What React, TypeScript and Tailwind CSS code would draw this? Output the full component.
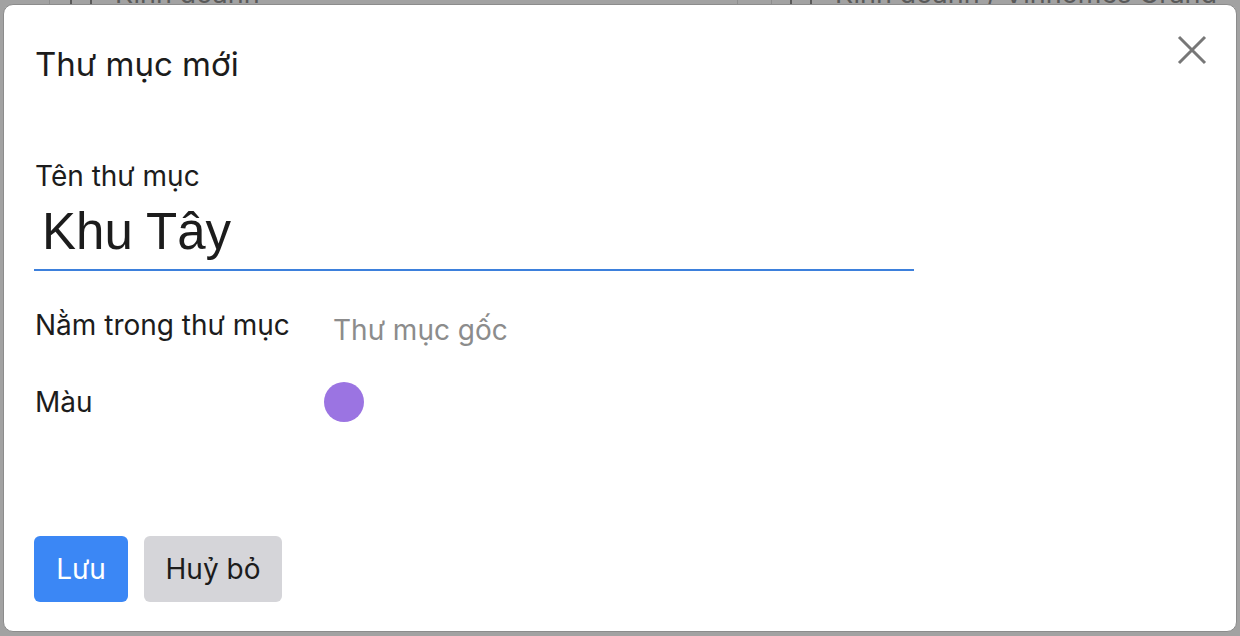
import React from "react";

function FolderBit() {
  return <div className="h-[20px] w-[22px] rounded-[3px] border-2 border-[#5a5a5a]" />;
}

export default function App() {
  return (
    <div className="relative h-[636px] w-[1240px] overflow-hidden bg-[#a2a2a2] [font-family:Inter,'Noto_Sans',sans-serif]">
      {/* page behind the dialog */}
      <div className="flex h-[30px] items-end -translate-y-[23px] text-[27px] leading-none text-[#5a5a5a]">
        <div className="h-full w-[50px] border-r border-[#8e8e8e]" />
        <div className="flex w-[687px] items-end gap-[23px] pl-[20px]">
          <FolderBit />
          <span>Kinh doanh</span>
        </div>
        <div className="h-full w-[35px] border-x border-[#8e8e8e]" />
        <div className="flex items-end gap-[23px] pl-[18px] whitespace-nowrap">
          <FolderBit />
          <span>Kinh doanh / Vinhomes Grand</span>
        </div>
      </div>

      {/* dialog */}
      <div className="absolute left-[3px] top-[4px] right-[3px] bottom-[4px] rounded-[10px] border border-[#8c8c8c] bg-white text-[#1c1c1c]">
        <div className="flex flex-col pl-[30px] pr-[30px] pt-[37px]">
          <div className="flex items-start justify-between">
            <h1 className="pl-[1px] text-[33px] leading-[44px] font-normal">Thư mục mới</h1>
            <svg width="30" height="30" viewBox="0 0 30 30" className="mr-[-1px] mt-[-7px]" fill="none" stroke="#777777" strokeWidth="3">
              <path d="M2 2 L28 28 M28 2 L2 28" />
            </svg>
          </div>

          <div className="mt-[73px] pl-[1px] text-[28px] leading-[34px]">Tên thư mục</div>
          <div className="mt-[9px] w-[880px] border-b-2 border-[#3d80dc] pb-[7px] pl-[8px] text-[51px] leading-[60px] [font-family:'Liberation_Sans',Arial,sans-serif]">
            Khu Tây
          </div>

          <div className="mt-[37px] flex items-start pl-[1px] text-[28px] leading-[34px]">
            <div className="w-[298px]">Nằm trong thư mục</div>
            <div className="mt-[5px] text-[#8c8c8c]">Thư mục gốc</div>
          </div>

          <div className="mt-[35px] flex items-start pl-[1px] text-[28px] leading-[34px]">
            <div className="w-[289px] pt-[3px]">Màu</div>
            <div className="h-[40px] w-[40px] rounded-full bg-[#9b74e2]" />
          </div>

          <div className="mt-[114px] flex gap-[16px] text-[28px]">
            <button className="h-[66px] w-[94px] rounded-[6px] bg-[#3b87f5] text-white">Lưu</button>
            <button className="h-[66px] w-[138px] rounded-[6px] bg-[#d5d5d9] text-[#1c1c1c]">Huỷ bỏ</button>
          </div>
        </div>
      </div>
    </div>
  );
}
